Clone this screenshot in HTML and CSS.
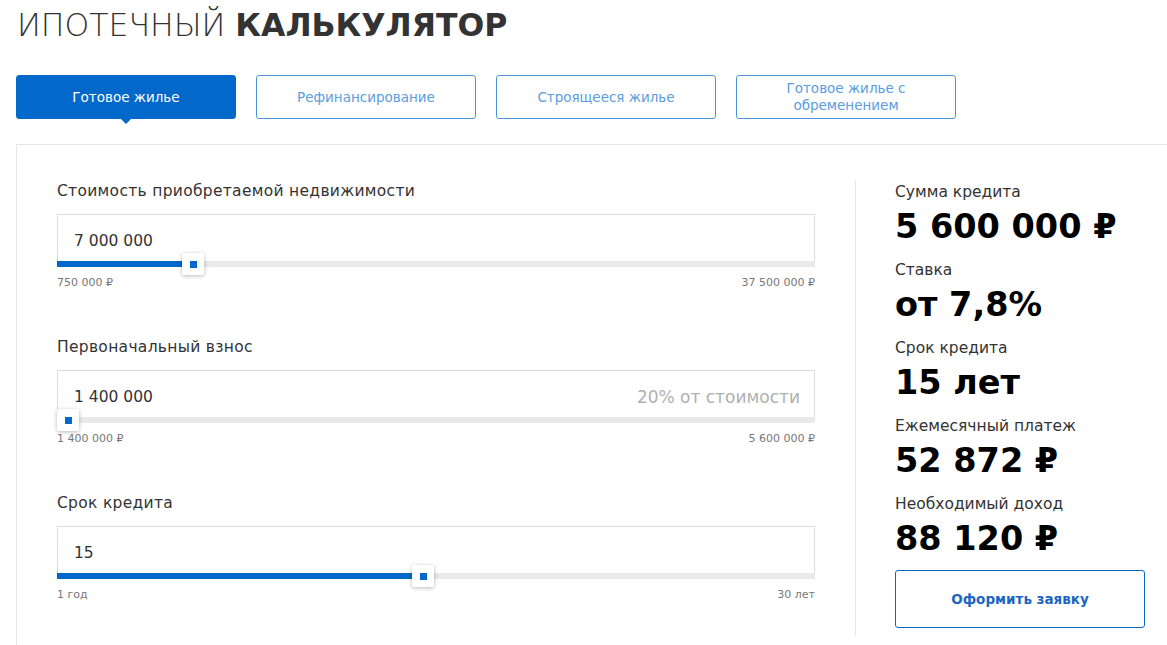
FILE: index.html
```html
<!DOCTYPE html>
<html lang="ru">
<head>
<meta charset="utf-8">
<title>Ипотечный калькулятор</title>
<link rel="stylesheet" href="styles.css">
</head>
<body>
<div class="page">
  <h1 class="title"><span class="light">ИПОТЕЧНЫЙ</span> <span class="bold">КАЛЬКУЛЯТОР</span></h1>
  <div class="tabs">
    <div class="tab active">Готовое жилье</div>
    <div class="tab">Рефинансирование</div>
    <div class="tab">Строящееся жилье</div>
    <div class="tab">Готовое жилье с<br>обременением</div>
  </div>
  <div class="panel">
    <div class="inputs">
      <div class="group">
        <div class="label">Стоимость приобретаемой недвижимости</div>
        <div class="field"><span class="value">7 000 000</span></div>
        <div class="track">
          <div class="fill" style="width: calc(0.17 * (100% - 22px) + 11px)"></div>
          <div class="thumb" style="left: calc(0.17 * (100% - 22px))"><i></i></div>
        </div>
        <div class="range"><span>750 000 ₽</span><span>37 500 000 ₽</span></div>
      </div>
      <div class="group">
        <div class="label">Первоначальный взнос</div>
        <div class="field"><span class="value">1 400 000</span><span class="hint">20% от стоимости</span></div>
        <div class="track">
          <div class="fill" style="width: 0"></div>
          <div class="thumb" style="left: 0"><i></i></div>
        </div>
        <div class="range"><span>1 400 000 ₽</span><span>5 600 000 ₽</span></div>
      </div>
      <div class="group">
        <div class="label">Срок кредита</div>
        <div class="field"><span class="value">15</span></div>
        <div class="track">
          <div class="fill" style="width: calc(0.4828 * (100% - 22px) + 11px)"></div>
          <div class="thumb" style="left: calc(0.4828 * (100% - 22px))"><i></i></div>
        </div>
        <div class="range"><span>1 год</span><span>30 лет</span></div>
      </div>
    </div>
    <div class="results">
      <div class="res">
        <div class="res-label">Сумма кредита</div>
        <div class="res-value">5 600 000 ₽</div>
      </div>
      <div class="res">
        <div class="res-label">Ставка</div>
        <div class="res-value">от 7,8%</div>
      </div>
      <div class="res">
        <div class="res-label">Срок кредита</div>
        <div class="res-value">15 лет</div>
      </div>
      <div class="res">
        <div class="res-label">Ежемесячный платеж</div>
        <div class="res-value">52 872 ₽</div>
      </div>
      <div class="res">
        <div class="res-label">Необходимый доход</div>
        <div class="res-value">88 120 ₽</div>
      </div>
      <button class="apply">Оформить заявку</button>
    </div>
  </div>
</div>
</body>
</html>
```

FILE: styles.css
```css
html, body {
  margin: 0;
  padding: 0;
  background: #fff;
  overflow: hidden;
}
body {
  font-family: "DejaVu Sans", "Noto Sans", sans-serif;
  color: #333;
}
.page {
  padding-left: 16px;
  width: 1180px;
}
.title {
  margin: 0;
  height: 50px;
  line-height: 50px;
  font-size: 31.5px;
  font-weight: normal;
  color: #333;
  padding-left: 1px;
}
.title .light { font-weight: 200; }
.title .bold { font-weight: bold; }
.tabs {
  display: flex;
  gap: 20px;
  margin-top: 25px;
}
.tab {
  position: relative;
  width: 220px;
  height: 44px;
  box-sizing: border-box;
  border: 1px solid #4b95de;
  border-radius: 3px;
  display: flex;
  align-items: center;
  justify-content: center;
  text-align: center;
  font-size: 13.5px;
  line-height: 17px;
  color: #5a9de0;
}
.tab.active {
  background: #0268c9;
  border-color: #0268c9;
  color: #fff;
}
.tab.active::after {
  content: "";
  position: absolute;
  left: 103px;
  bottom: -6px;
  border-left: 6px solid transparent;
  border-right: 6px solid transparent;
  border-top: 6px solid #0268c9;
}
.panel {
  margin-top: 25px;
  border-top: 1px solid #e6e6e6;
  border-left: 1px solid #e6e6e6;
  display: flex;
  height: 520px;
}
.inputs {
  width: 758px;
  padding: 35px 40px 0 40px;
}
.group { margin-bottom: 46px; }
.label {
  font-size: 15.5px;
  letter-spacing: 0.3px;
  line-height: 22px;
  color: #333;
  margin-bottom: 12px;
}
.field {
  height: 47px;
  box-sizing: border-box;
  border: 1px solid #dcdcdc;
  border-bottom: none;
  display: flex;
  align-items: center;
  justify-content: space-between;
  padding: 6px 14px 0 16px;
}
.value {
  font-size: 15.5px;
  color: #333;
}
.hint {
  font-size: 17px;
  color: #b0b0b0;
}
.track {
  position: relative;
  height: 6px;
  background: #e9e9e9;
}
.fill {
  height: 6px;
  background: #0268c9;
}
.thumb {
  position: absolute;
  top: -8px;
  width: 22px;
  height: 22px;
  background: #fff;
  border-radius: 2px;
  box-shadow: 0 1px 4px rgba(0, 0, 0, 0.28);
  display: flex;
  align-items: center;
  justify-content: center;
}
.thumb i {
  display: block;
  width: 7px;
  height: 7px;
  background: #0268c9;
}
.range {
  display: flex;
  justify-content: space-between;
  margin-top: 9px;
  font-size: 11px;
  line-height: 14px;
  color: #777;
}
.results {
  margin-top: 35px;
  border-left: 1px solid #e6e6e6;
  padding: 2px 0 8px 39px;
  height: fit-content;
}
.res { margin-bottom: 13px; }
.res:last-of-type { margin-bottom: 11px; }
.res-label {
  font-size: 15.5px;
  line-height: 20px;
  color: #333;
}
.res-value {
  margin-top: 5px;
  font-size: 33.5px;
  line-height: 40px;
  font-weight: bold;
  color: #000;
}
.apply {
  display: block;
  width: 250px;
  height: 58px;
  border: 1px solid #0a66c2;
  border-radius: 3px;
  background: #fff;
  color: #1a66c0;
  font-family: inherit;
  font-weight: bold;
  font-size: 13.5px;
}
```
